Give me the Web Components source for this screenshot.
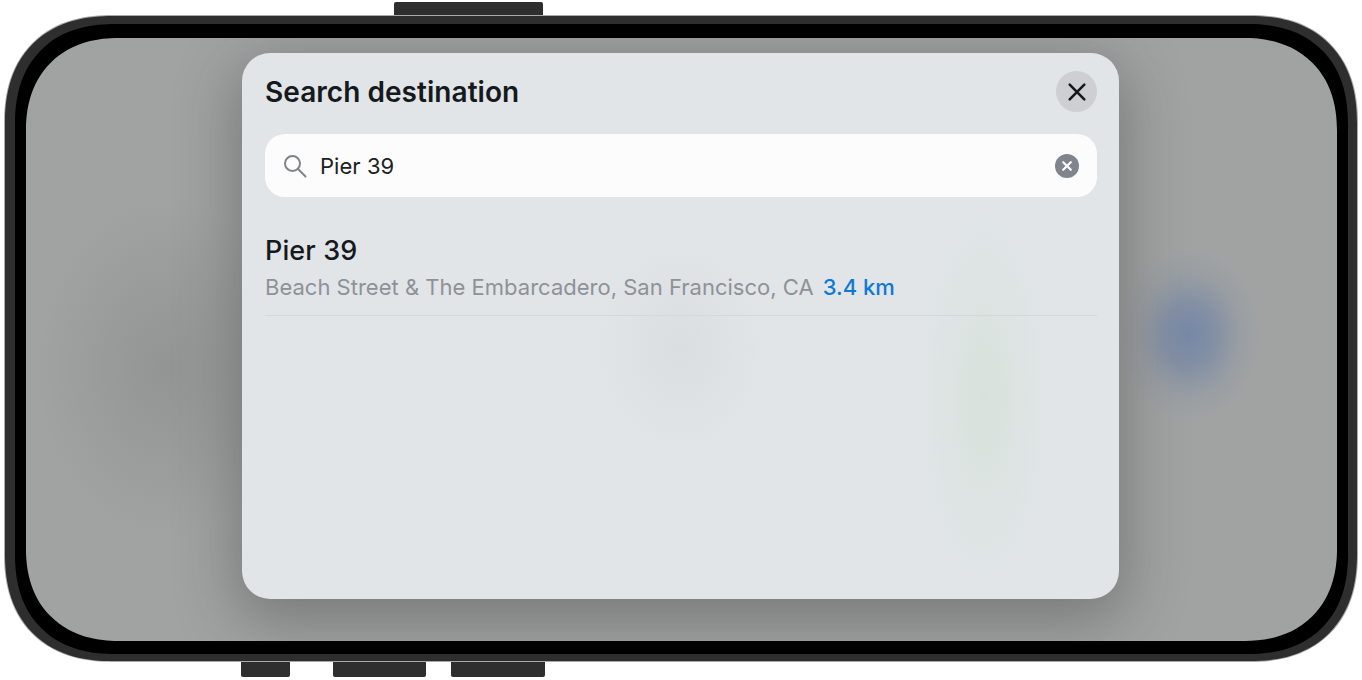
<!DOCTYPE html>
<html>
<head>
<meta charset="utf-8">
<title>Search destination</title>
<style>
    html, body { margin: 0; background: #fff; }
    body { font-family: Inter, "Liberation Sans", sans-serif; overflow: hidden; }
</style>
</head>
<body>
<phone-frame>
    <search-sheet heading="Search destination">
        <search-field value="Pier 39"></search-field>
        <result-row name="Pier 39" address="Beach Street &amp; The Embarcadero, San Francisco, CA" distance="3.4 km"></result-row>
    </search-sheet>
</phone-frame>

<script>
/**
 * Device body: side keys above and below, bezel rings and the blurred screen
 */
class PhoneFrame extends HTMLElement {
    connectedCallback() {
        this.attachShadow({ mode: 'open' });
        this.shadowRoot.innerHTML = `
            <style>
                :host {
                    display: block;
                    width: 1362px;
                    height: 680px;
                    box-sizing: border-box;
                    padding-top: 2px;
                }
                .keys {
                    display: flex;
                    height: 13px;
                    align-items: stretch;
                }
                .keys.top { padding-left: 394px; }
                .keys.bottom { padding-left: 241px; height: 15px; }
                .key {
                    background: #2e2e2e;
                    border-radius: 2px 2px 0 0;
                }
                .keys.bottom .key { border-radius: 0 0 2px 2px; }
                .case {
                    box-sizing: border-box;
                    width: 1354px;
                    height: 647px;
                    margin-left: 4px;
                    padding: 1px;
                    background: #a9a9a9;
                    border-radius: 108px;
                    corner-shape: superellipse(1.2);
                }
                .ring {
                    box-sizing: border-box;
                    height: 100%;
                    padding: 8px 9px 7px 10px;
                    background: #2e2e2e;
                    border-radius: 107px;
                    corner-shape: superellipse(1.2);
                }
                .bezel {
                    box-sizing: border-box;
                    height: 100%;
                    padding: 14px 11px 13px;
                    background: #000;
                    border-radius: 100px;
                    corner-shape: superellipse(1.2);
                }
                .screen {
                    display: flex;
                    justify-content: center;
                    align-items: flex-start;
                    box-sizing: border-box;
                    height: 100%;
                    padding: 15px 2px 0 0;
                    border-radius: 92px;
                    corner-shape: superellipse(1.15);
                    overflow: hidden;
                    background:
                        radial-gradient(ellipse 72px 88px at 1164px 297px, rgba(98,124,170,.68), rgba(106,128,165,.55) 35%, rgba(125,140,165,.2) 70%, rgba(150,155,165,0) 100%),
                        radial-gradient(ellipse 130px 170px at 140px 330px, rgba(110,110,110,.28), rgba(130,130,130,0) 100%),
                        #a1a3a3;
                }
            </style>
            <div class="keys top">
                <div class="key" style="width:149px"></div>
            </div>
            <div class="case">
                <div class="ring">
                    <div class="bezel">
                        <div class="screen"><slot></slot></div>
                    </div>
                </div>
            </div>
            <div class="keys bottom">
                <div class="key" style="width:49px"></div>
                <div class="key" style="width:93px;margin-left:43px"></div>
                <div class="key" style="width:94px;margin-left:25px"></div>
            </div>
        `;
    }
}

/**
 * Modal sheet with the title, close button and slotted content
 */
class SearchSheet extends HTMLElement {
    connectedCallback() {
        this.attachShadow({ mode: 'open' });
        this.shadowRoot.innerHTML = `
            <style>
                :host {
                    display: block;
                    flex: none;
                    box-sizing: border-box;
                    width: 877px;
                    height: 546px;
                    padding: 18px 22px 0 23px;
                    border-radius: 28px;
                    color: #16191c;
                    background:
                        radial-gradient(ellipse 70px 200px at 742px 345px, rgba(212,224,214,.7), rgba(216,226,220,0) 100%),
                        radial-gradient(ellipse 85px 105px at 438px 295px, rgba(214,217,219,.6), rgba(222,226,229,0) 100%),
                        #e1e5e8;
                    box-shadow: 0 16px 60px 6px rgba(40,40,40,.34);
                }
                header {
                    display: flex;
                    justify-content: space-between;
                    align-items: center;
                    height: 41px;
                    margin-bottom: 22px;
                }
                h1 {
                    margin: 0;
                    font-size: 28px;
                    font-weight: 600;
                    letter-spacing: 0.05px;
                }
                button {
                    display: flex;
                    align-items: center;
                    justify-content: center;
                    width: 41px;
                    height: 41px;
                    padding: 0;
                    border: 0;
                    border-radius: 50%;
                    background: #cdcfd3;
                }
            </style>
            <header>
                <h1>${this.getAttribute('heading')}</h1>
                <button aria-label="Close">
                    <svg width="21" height="21" viewBox="-0.5 -0.5 21 21" fill="none" stroke="#16191c" stroke-width="2.6" stroke-linecap="round">
                        <path d="M3.2 3.2 17.8 17.8M17.8 3.2 3.2 17.8"/>
                    </svg>
                </button>
            </header>
            <slot></slot>
        `;
    }
}

/**
 * White rounded search input with magnifier and clear button
 */
class SearchField extends HTMLElement {
    connectedCallback() {
        this.attachShadow({ mode: 'open' });
        this.shadowRoot.innerHTML = `
            <style>
                :host {
                    display: flex;
                    align-items: center;
                    box-sizing: border-box;
                    height: 63px;
                    padding: 0 18px;
                    background: #fcfcfc;
                    border-radius: 20px;
                    color: #1d2023;
                }
                svg { flex: none; display: block; }
                span {
                    flex: 1;
                    margin-left: 13px;
                    font-size: 22px;
                    letter-spacing: 0.05px;
                }
            </style>
            <svg width="24" height="24" viewBox="0 0 24 24" fill="none" stroke="#808489" stroke-width="2" stroke-linecap="round">
                <circle cx="9.5" cy="9.5" r="7.5"/>
                <path d="M15 15 22.5 22.5"/>
            </svg>
            <span>${this.getAttribute('value')}</span>
            <svg width="24" height="24" viewBox="0 0 24 24" fill="none">
                <circle cx="12" cy="12" r="12" fill="#7f848d"/>
                <path d="M8.2 8.2 15.8 15.8M15.8 8.2 8.2 15.8" stroke="#fff" stroke-width="2.2" stroke-linecap="round"/>
            </svg>
        `;
    }
}

/**
 * One search result: place name, address, distance and the divider below
 */
class ResultRow extends HTMLElement {
    connectedCallback() {
        this.attachShadow({ mode: 'open' });
        this.shadowRoot.innerHTML = `
            <style>
                :host {
                    display: block;
                    box-sizing: border-box;
                    height: 119px;
                    padding-top: 37px;
                    border-bottom: 1px solid #d4d8db;
                }
                .name {
                    font-size: 27px;
                    line-height: 34px;
                    font-weight: 450;
                    letter-spacing: 0.1px;
                    color: #16191c;
                }
                .sub {
                    display: flex;
                    margin-top: 4px;
                    font-size: 22px;
                    line-height: 30px;
                    letter-spacing: 0.01px;
                }
                .address { color: #8e9297; }
                .distance {
                    margin-left: 9px;
                    font-weight: 500;
                    color: #0f7ad4;
                }
            </style>
            <div class="name">${this.getAttribute('name')}</div>
            <div class="sub">
                <span class="address">${this.getAttribute('address').replace('&', '&amp;')}</span>
                <span class="distance">${this.getAttribute('distance')}</span>
            </div>
        `;
    }
}

customElements.define("phone-frame", PhoneFrame);
customElements.define("search-sheet", SearchSheet);
customElements.define("search-field", SearchField);
customElements.define("result-row", ResultRow);
</script>
</body>
</html>
